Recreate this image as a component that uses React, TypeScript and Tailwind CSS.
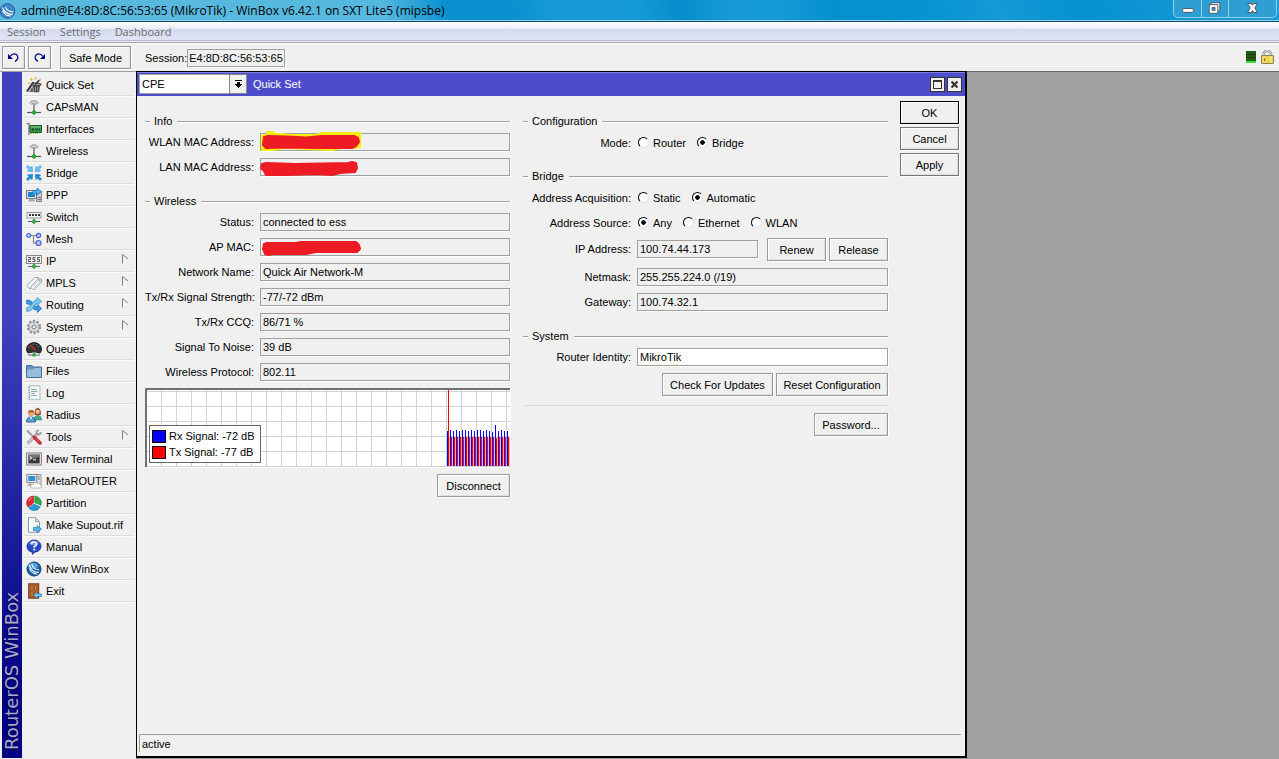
import React, { useState } from 'react';

/* ---------- shared pieces ---------- */

const btn =
  'h-[23px] border border-[#9a9a9a] bg-[#f0f0f0] text-center text-black shadow-[1px_1px_0_#fff,inset_1px_1px_0_#fff,inset_-1px_-1px_0_#e0e0e0]';

function Button({ children, className = '' }: { children: React.ReactNode; className?: string }) {
  return (
    <button type="button" className={`${btn} ${className}`}>
      {children}
    </button>
  );
}

function Group({ title, children }: { title: string; children: React.ReactNode }) {
  return (
    <section className="mb-3">
      <h2 className="flex h-[18px] items-center gap-1">
        <span className="h-px w-[5px] bg-[#a0a0a0] shadow-[0_1px_0_#fff]" />
        <span>{title}</span>
        <span className="ml-px h-px flex-1 bg-[#a0a0a0] shadow-[0_1px_0_#fff]" />
      </h2>
      {children}
    </section>
  );
}

function Scribble({ d, glow }: { d: string; glow?: boolean }) {
  return (
    <svg className="pointer-events-none absolute -top-1 -left-1 h-[26px] w-[110px]" viewBox="0 0 110 26" aria-hidden="true">
      {glow && <path d="M5 6 L10 5 L10 2 L18 2 L19 4 L27 4 L33 5 L60 5 L65 3 L105 3 L105 19 L97 20 L86 20 L76 22 L52 21 L29 20 L17 22 L5 22Z" fill="#f6ee10" />}
      <path d={d} fill="#ed1c24" stroke="#ed1c24" strokeWidth="2" strokeLinejoin="round" />
    </svg>
  );
}

function Field({
  id,
  label,
  labelWidth,
  value,
  editable,
  children,
}: {
  id: string;
  label: string;
  labelWidth: string;
  value: string;
  editable?: boolean;
  children?: React.ReactNode;
}) {
  return (
    <div className="flex h-[25px] items-start pt-[3px]">
      <label htmlFor={id} className={`${labelWidth} shrink-0 pr-[6px] text-right leading-[19px] whitespace-nowrap`}>
        {label}
      </label>
      <div className="relative min-w-0 flex-1">
        <input
          id={id}
          defaultValue={value}
          readOnly={!editable}
          className={`block h-[18px] w-full border border-[#a0a0a0] px-[2px] shadow-[1px_1px_0_#fff] outline-none ${editable ? 'bg-white' : 'bg-[#f0f0f0]'}`}
        />
        {children}
      </div>
    </div>
  );
}

function Radios({ label, name, options, initial }: { label: string; name: string; options: string[]; initial: string }) {
  const [value, setValue] = useState(initial);
  return (
    <fieldset className="flex h-[25px] items-center gap-2">
      <legend className="float-left w-[108px] shrink-0 text-right whitespace-nowrap">{label}</legend>
      <div className="-ml-px flex items-center gap-[11px]">
        {options.map((o) => (
          <label key={o} className="flex items-center gap-1">
            <input
              type="radio"
              name={name}
              checked={value === o}
              onChange={() => setValue(o)}
              className="size-[11px] appearance-none rounded-full border border-t-black border-r-[#e4e4e4] border-b-[#e4e4e4] border-l-black bg-white checked:bg-[radial-gradient(circle,#000_0_2px,#fff_2.5px)]"
            />
            {o}
          </label>
        ))}
      </div>
    </fieldset>
  );
}

/* ---------- icons (16 x 16) ---------- */

const wireless = (
  <>
    <path d="M3.5 4.5 Q8 -1 12.5 4.5" fill="none" stroke="#aaa" strokeWidth="1.3" />
    <path d="M5.5 5.5 Q8 2.5 10.5 5.5" fill="none" stroke="#8a8a8a" strokeWidth="1.2" />
    <path d="M8 5V13" stroke="#777" strokeWidth="1.5" />
    <path d="M1 13.5H15" stroke="#555" strokeWidth="1.2" />
    <path d="M8 11 10.5 13.5 8 15.8 5.5 13.5Z" fill="#25b52f" stroke="#087018" strokeWidth=".6" />
  </>
);

const globe = (
  <>
    <circle cx="8" cy="8" r="7" fill="#1b62ae" stroke="#0e3b74" />
    <ellipse cx="7" cy="4.8" rx="5" ry="3" fill="#5da4df" />
    <path d="M3.5 4 Q5 11.5 13 11.5M6 3.5 Q7 8.5 13 9M3.5 7.5 Q6 13 11 13" fill="none" stroke="#fff" strokeWidth="1.1" />
  </>
);

const icons: Record<string, React.ReactNode> = {
  'Quick Set': (
    <>
      <path d="M1 14.5 L7.5 5" stroke="#3a3a3a" strokeWidth="2.2" />
      <path d="M3 15 L6.5 9 L7.5 15Z" fill="#6b6b6b" />
      <path d="M7 7.5 L14 7.5 L13.2 15.2 H7.6Z" fill="#4c4c4c" />
      <path d="M9.3 9.5 9.6 14M11.5 9.5V14" stroke="#a5a5a5" strokeWidth=".8" />
      <ellipse cx="10.5" cy="7.5" rx="4.8" ry="1.4" fill="#9a9a9a" stroke="#222" strokeWidth=".8" />
      <path d="M9 7.5 L14.5 2" stroke="#333" strokeWidth="1.6" />
      <path d="M13.3 3.2 L14.5 1.8" stroke="#ddd" strokeWidth="1.4" />
      <path d="M5.5 .8V4.2M3.8 2.5H7.2M9.5 0V2.6M8.2 1.3H10.8M3 5V7M2 6H4" stroke="#d9bd27" strokeWidth=".9" />
    </>
  ),
  CAPsMAN: wireless,
  Wireless: wireless,
  Interfaces: (
    <>
      <path d="M.5 2.5H3V14" fill="none" stroke="#888" strokeWidth="1.6" />
      <path d="M4 4.5H15.5V11.5H4Z" fill="#3b9a4c" stroke="#176129" />
      <path d="M5 6H14.5" stroke="#8ccc86" />
      <path d="M6 7.5h2v2H6zM9.5 7.5h2v2h-2zM12.7 7.5h1.5v2h-1.5z" fill="#17452a" />
      <path d="M5 12.5H13" stroke="#cfae32" strokeDasharray="1 1" />
    </>
  ),
  Bridge: (
    <g fill="#6cc5f2" stroke="#3a94d2" strokeWidth=".7">
      <path d="M.5 2 2 .5 4.5 3 6 1.5 6.5 6.5 1.5 6 3 4.5Z" />
      <path d="M15.5 2 14 .5 11.5 3 10 1.5 9.5 6.5 14.5 6 13 4.5Z" />
      <path d="M.5 14 2 15.5 4.5 13 6 14.5 6.5 9.5 1.5 10 3 11.5Z" fill="#2492d8" stroke="#1167ab" />
      <path d="M15.5 14 14 15.5 11.5 13 10 14.5 9.5 9.5 14.5 10 13 11.5Z" fill="#2492d8" stroke="#1167ab" />
    </g>
  ),
  PPP: (
    <>
      <rect x="10.5" y="4.5" width="5" height="10" fill="#ccc" stroke="#888" />
      <path d="M11.5 10.5H15M11.5 12.5H15" stroke="#777" />
      <rect x=".5" y="3.5" width="10" height="8" fill="#ddd" stroke="#777" />
      <rect x="2" y="5" width="7" height="5" fill="#1f87c9" />
      <path d="M3.5 11.5H8L9 14.5H2Z" fill="#aaa" />
      <path d="M7 8V3.5H11V1L15.5 4.5 11 8V6H9V8Z" fill="#51b3ec" stroke="#1675b9" strokeWidth=".7" />
    </>
  ),
  Switch: (
    <>
      <rect x="1" y="3.5" width="14" height="5.5" fill="#f8f8f8" stroke="#999" />
      <path d="M3 6H14" stroke="#333" strokeWidth="1.8" strokeDasharray="2 1" />
      <path d="M8 9.5V12M2 12.5H14" stroke="#555" />
      <path d="M8 10.5 10.3 12.6 8 14.8 5.7 12.6Z" fill="#35b83c" stroke="#0b7519" strokeWidth=".6" />
    </>
  ),
  Mesh: (
    <>
      <path d="M4.7 4.5H10M7.5 4.5V12H10" fill="none" stroke="#888" strokeWidth="1.2" />
      <g fill="#b5c5ff" stroke="#4a62c9" strokeWidth="1.2">
        <circle cx="2.7" cy="4.5" r="2" />
        <circle cx="12.5" cy="4.5" r="2.2" />
        <circle cx="12.5" cy="12" r="2.5" />
      </g>
    </>
  ),
  IP: (
    <>
      <rect x=".5" y="2.5" width="15" height="8" fill="#eee" stroke="#888" />
      <path d="M2 4.5H4.5V6.5H2.5V8.5H5M9.5 4.5H7V6.5H9V8.5H6.5M14 4.5H11.5V6.5H13.5V8.5H11" fill="none" stroke="#444" strokeWidth=".9" />
      <path d="M8 10.5V13M2 13.5H14" stroke="#666" />
      <path d="M8 11.3 10.3 13.4 8 15.6 5.7 13.4Z" fill="#35b83c" stroke="#0b7519" strokeWidth=".6" />
    </>
  ),
  MPLS: (
    <g fill="#f6f9f9" stroke="#93a5a8">
      <path d="M.8 10.5 9 2.5H12.5L12 6 4 14Z" />
      <path d="M4.5 12 12 4H15.5V7L7.5 15Z" />
      <path d="M6.5 11.5 11.5 6.5M8 13 13 8" stroke="#c7d4d5" />
      <circle cx="13.5" cy="5.8" r=".7" />
    </g>
  ),
  Routing: (
    <>
      <path d="M.7 3 Q5 2.5 7.5 6.5 Q9.5 10 11.5 10V7.5L15.7 11.5 11.5 15.5V13.2Q7.5 13.5 5 9.5 Q3.5 6.5 .7 6.8Z" fill="#3d9bdb" stroke="#176ead" strokeWidth=".7" />
      <path d="M.7 10.5 Q4 10.5 6 6.5 Q8 2.8 11 2.8V.5L15.7 4.5 11 8.2V6.2Q9.5 6.5 8.2 9.2Q5.5 14.8 .7 14.3Z" fill="#7ec7f1" stroke="#2f86bf" strokeWidth=".7" />
    </>
  ),
  System: (
    <>
      <circle cx="8" cy="8" r="6" fill="#ddd" stroke="#8f8f8f" strokeWidth="2.4" strokeDasharray="2.2 1.57" />
      <circle cx="8" cy="8" r="5" fill="#e4e4e4" stroke="#999" strokeWidth=".8" />
      <circle cx="8" cy="8" r="2" fill="#f5f5f5" stroke="#777" />
      <path d="M8 3.8V5.5M8 10.5V12.2M3.8 8H5.5M10.5 8H12.2" stroke="#aaa" />
    </>
  ),
  Queues: (
    <>
      <path d="M2 12 A7.5 6.5 0 1 1 14 12 Q8 9.5 2 12Z" fill="#323232" stroke="#1b1b1b" />
      <path d="M2.5 7 Q4 3.5 8 3 Q12 3.5 13.5 7" fill="none" stroke="#aaa" strokeDasharray="1 2" />
      <path d="M4.5 4.5 9.5 9" stroke="#e12727" strokeWidth="1.2" />
      <path d="M8 11V14M2 14H14" stroke="#666" />
      <rect x="6.5" y="12.5" width="3" height="3" fill="#21ad31" />
    </>
  ),
  Files: (
    <>
      <path d="M.5 2.5H6L7 4H15.5V14.5H.5Z" fill="#6695bd" stroke="#416f99" />
      <path d="M1 6.5H7L8.5 5H15V14H1Z" fill="#98bbda" />
    </>
  ),
  Log: (
    <>
      <path d="M3 .8H14V15L12.6 14 11.2 15 9.8 14 8.4 15 7 14 5.6 15 4.2 14 3 15Z" fill="#f3f8f6" stroke="#a3b9b5" strokeWidth=".9" />
      <path d="M5 4.5H11M5 6.5H11.5M5 8.5H9M5 10.5H11" stroke="#96aaa5" />
      <path d="M3.5 2V14" stroke="#6d8782" strokeDasharray="1 1.5" />
    </>
  ),
  Radius: (
    <>
      <path d="M8.5 8 Q8.5 1 11.5 1 Q15.3 1 14.8 8Z" fill="#914326" />
      <circle cx="11.7" cy="4.7" r="2.2" fill="#f1b99b" />
      <path d="M8 13Q8 8.5 11.7 8.5T15.5 13Z" fill="#49a987" stroke="#247861" strokeWidth=".6" />
      <circle cx="5" cy="6.5" r="3" fill="#eda57c" />
      <path d="M2 6Q2 2.5 5.2 3 8.5 3 8 6 5 4.5 2 6Z" fill="#a36828" />
      <path d="M.5 15Q.5 10 5 10T9.5 15Z" fill="#539bd1" stroke="#1e5a94" strokeWidth=".8" />
      <path d="M4 10 5 13 6 10Z" fill="#fff" />
    </>
  ),
  Tools: (
    <>
      <path d="M1.5 14.5 11 5" stroke="#888" strokeWidth="3" />
      <path d="M1.5 14.5 11 5" stroke="#ddd" strokeWidth="1.5" />
      <path d="M12.5 .8 10.5 2.7 11 5 13.3 5.5 15.3 3.5" fill="none" stroke="#999" strokeWidth="1.8" />
      <path d="M1 1.5 8 8.5" stroke="#999" strokeWidth="1.8" />
      <path d="M8.3 8.3 14 14" stroke="#c8252e" strokeWidth="3.4" strokeLinecap="round" />
      <path d="M9 8.5 14 13.5" stroke="#f26970" />
    </>
  ),
  'New Terminal': (
    <>
      <rect x=".7" y="2" width="14.6" height="12" fill="#f5f5f5" stroke="#777" />
      <rect x="2.3" y="3.5" width="11.4" height="9" fill="#3a3a3a" />
      <path d="M3 4H13V6L3 9Z" fill="#737373" />
      <path d="M4 5.5 5.8 7 4 8.5M7 8.8H10" fill="none" stroke="#fff" />
    </>
  ),
  MetaROUTER: (
    <>
      <rect x="10.5" y="1.5" width="4.5" height="11" fill="#ddd" stroke="#999" />
      <path d="M11.5 4H14M11.5 6H14" stroke="#888" />
      <rect x=".8" y="1.5" width="10" height="8" fill="#eee" stroke="#888" />
      <rect x="2.3" y="3" width="7" height="5" fill="#2a91d7" />
      <path d="M1 13H6L5.5 10.5H3Z" fill="#aaa" />
      <path d="M5 15Q3.8 11.8 7 11.5 8.5 7.5 11.5 10.5 14 9.5 14 11.8 17 12.8 15 15Z" fill="#fff" stroke="#a8a8a8" strokeWidth=".8" />
    </>
  ),
  Partition: (
    <>
      <path d="M7.5 8V1A7 7 0 0 0 2 12.2Z" fill="#e12a2e" stroke="#a31118" strokeWidth=".5" />
      <path d="M8.7 7.5V1A7 7 0 0 1 14.9 10.5Z" fill="#32ac49" stroke="#15722b" strokeWidth=".5" />
      <path d="M8 9 14.3 12A7 7 0 0 1 2.8 13Z" fill="#239bd4" stroke="#08649b" strokeWidth=".5" />
      <path d="M3 6Q3.5 3.5 6 2.8" stroke="#ff9191" fill="none" />
    </>
  ),
  'Make Supout.rif': (
    <>
      <path d="M2.5.7H9.5L13.5 4.5V15.2H2.5Z" fill="#f8fcfc" stroke="#849c9b" />
      <path d="M9.5.7V4.7H13.5" fill="#ccdddd" stroke="#91a5a4" />
      <path d="M7.5 10.5H11V8.5L15.5 12 11 15.5V13.5H7.5Z" fill="#59b8ed" stroke="#1d78b6" strokeWidth=".7" />
    </>
  ),
  Manual: (
    <>
      <path d="M8 1C12 1 15 3.5 15 7.2S12 13 9 13L6.5 15.5 6 13C2.5 12.5 1 10 1 7.2S4 1 8 1Z" fill="#2847c4" stroke="#162a86" strokeWidth=".7" />
      <ellipse cx="8" cy="4" rx="5" ry="2.3" fill="#6583e6" />
      <path d="M5.7 5.2Q5.7 3 8 3T10.4 5.2Q10.4 6.5 8.2 7.5V8.7" fill="none" stroke="#fff" strokeWidth="1.7" />
      <rect x="7.2" y="9.7" width="2" height="1.8" fill="#fff" />
    </>
  ),
  'New WinBox': globe,
  Exit: (
    <>
      <rect x="2.7" y=".8" width="10" height="14.4" fill="#b56630" stroke="#6f3410" />
      <path d="M5 2.8H7V7H5ZM8.5 2.8H10.5V7H8.5ZM5 8.8H7V13.5H5ZM8.5 8.8H10.5V13.5H8.5Z" fill="#d28a4f" stroke="#824018" strokeWidth=".6" />
      <path d="M15.5 11V13.5H11.5V15.5L7.5 12.2 11.5 9V11Z" fill="#7cccf4" stroke="#1878b2" strokeWidth=".7" />
    </>
  ),
};

const menu = [
  'Quick Set', 'CAPsMAN', 'Interfaces', 'Wireless', 'Bridge', 'PPP', 'Switch', 'Mesh',
  'IP', 'MPLS', 'Routing', 'System', 'Queues', 'Files', 'Log', 'Radius', 'Tools',
  'New Terminal', 'MetaROUTER', 'Partition', 'Make Supout.rif', 'Manual', 'New WinBox', 'Exit',
];
const withSubmenu = new Set(['IP', 'MPLS', 'Routing', 'System', 'Tools']);

/* ---------- application chrome ---------- */

function TitleBar() {
  return (
    <header className="flex h-[22px] shrink-0 items-start justify-between border-b border-[#124b66] bg-[linear-gradient(75deg,#5ab9dd_0%,#56b8de_30%,#0a90cf_35%,#0a90cf_40%,#169ad7_43%,#149ad6_50%,#078dcb_53%,#159ad7_57%,#149ad7_61%,#0690cf_65%,#0593d3_72%,#149ad6_78%,#0691d1_84%,#1b9cd6_100%)] shadow-[inset_0_-1px_0_#8fd3ee]">
      <div className="flex h-[21px] items-center">
        <svg className="mr-[5px] size-4 shrink-0" viewBox="0 0 16 16" aria-hidden="true">
          <circle cx="7.5" cy="8" r="7.3" fill="#3b87c8" stroke="#265f9b" />
          <path d="M2.5 4.5Q5 11.8 13 11.3M5.5 3.8Q7 8.6 13.5 9M2.5 7.8Q5.5 13.3 11 13" fill="none" stroke="#fff" strokeWidth="1.1" />
        </svg>
        <h1 className="font-['Open_Sans','Noto_Sans',sans-serif] text-[12px] whitespace-nowrap">
          admin@E4:8D:8C:56:53:65 (MikroTik) - WinBox v6.42.1 on SXT Lite5 (mipsbe)
        </h1>
      </div>
      <div className="mr-[2px] flex h-[18px] divide-x divide-[#8fd0ea] rounded-b-[5px] border border-t-0 border-[#8fd0ea] bg-[#2d9fd3]">
        <button type="button" aria-label="Minimize" className="w-[28px]">
          <svg viewBox="0 0 28 17" className="h-[17px] w-full" aria-hidden="true">
            <rect x="9" y="8.5" width="11" height="4" rx="1" fill="#fff" stroke="#4b5867" />
          </svg>
        </button>
        <button type="button" aria-label="Restore" className="w-[27px]">
          <svg viewBox="0 0 27 17" className="h-[17px] w-full" aria-hidden="true">
            <path d="M9.5 2.5H18.5V11H9.5Z" fill="#fff" stroke="#4b5867" />
            <path d="M7.5 4.5H16.5V13.5H7.5Z" fill="#fff" stroke="#4b5867" />
            <path d="M10.5 7.5H13.5V10.5H10.5Z" fill="#2d9fd3" stroke="#4b5867" />
          </svg>
        </button>
        <button type="button" aria-label="Close" className="w-[47px]">
          <svg viewBox="0 0 47 17" className="h-[17px] w-full" aria-hidden="true">
            <path d="M18.5 3.5H22.3L23.5 5.3 24.7 3.5H28.5L25.8 8 28.5 12.5H24.7L23.5 10.5 22.3 12.5H18.5L21.2 8Z" fill="#fff" stroke="#4b5867" />
          </svg>
        </button>
      </div>
    </header>
  );
}

function MenuBar() {
  return (
    <nav className="flex h-[21px] shrink-0 items-center gap-[14px] border-b border-[#a0a0a0] bg-[linear-gradient(#fff_0,#e8ebf5_7px,#d4daed_7px,#dfe4f6_18px,#b5bdd3_18px,#b5bdd3_19px,#f0f0f0_19px)] px-[7px] font-['Open_Sans','Noto_Sans',sans-serif] text-[11px] leading-[18px] text-[#6d6d6d]">
      <button type="button">Session</button>
      <button type="button">Settings</button>
      <button type="button">Dashboard</button>
    </nav>
  );
}

function Toolbar() {
  return (
    <div className="flex h-7 shrink-0 items-center border-t border-white px-[2px]">
      <Button className="grid w-[23px] place-items-center">
        <svg className="size-[13px]" viewBox="0 0 13 13" role="img" aria-label="Undo">
          <path d="M3 5.5Q6 1.5 9.5 3.5 13 7 8 10.5" fill="none" stroke="#000080" strokeWidth="1.2" />
          <path d="M1 3V8H6Z" fill="#000080" />
        </svg>
      </Button>
      <Button className="ml-[3px] grid w-[23px] place-items-center">
        <svg className="size-[13px]" viewBox="0 0 13 13" role="img" aria-label="Redo">
          <path d="M10 5.5Q7 1.5 3.5 3.5 0 7 5 10.5" fill="none" stroke="#000080" strokeWidth="1.2" />
          <path d="M12 3V8H7Z" fill="#000080" />
        </svg>
      </Button>
      <Button className="ml-[9px] w-[71px]">Safe Mode</Button>
      <label htmlFor="session" className="ml-[14px]">Session:</label>
      <input id="session" readOnly value="E4:8D:8C:56:53:65" className="h-[18px] w-[98px] border border-[#a0a0a0] bg-[#f0f0f0] px-px shadow-[1px_1px_0_#fff] outline-none" />
      <svg className="mr-[3px] ml-auto h-4 w-7 shrink-0" viewBox="0 0 28 16" role="img" aria-label="CPU load and secure connection">
        <rect x="0" y="1" width="10" height="12" fill="#245c14" />
        <path d="M0 4.5H10M0 7.5H10" stroke="#123c08" />
        <path d="M0 12H10" stroke="#3ddc3d" strokeWidth="2" />
        <path d="M17.5 6V3.5L19.5 1H23L25 3.5V6" fill="none" stroke="#8d8d8d" strokeWidth="2.4" />
        <path d="M17.5 6V3.5L19.5 1H23L25 3.5V6" fill="none" stroke="#e8e8e8" strokeWidth="1" />
        <rect x="15.5" y="5.5" width="12" height="8" rx=".5" fill="#f1d252" stroke="#8b8354" />
        <path d="M18 6V13M25 6V13" stroke="#fff0a6" />
        <path d="M18.5 8.5V11" stroke="#7b6515" strokeWidth="1.2" />
      </svg>
    </div>
  );
}

function Sidebar() {
  return (
    <aside className="flex w-[136px] shrink-0 border-t border-[#a0a0a0] bg-[#f0f0f0] pl-[2px]">
      <div className="mb-px flex w-5 shrink-0 rotate-180 items-center justify-start bg-[linear-gradient(#000080_0%,#000080_8%,#4040c0_65%,#4040c0_100%)] [writing-mode:vertical-rl]">
        <div className="mt-2 font-['DejaVu_Sans',sans-serif] text-[18px] leading-5 whitespace-nowrap text-[#a9a9ce] [text-shadow:-1px_-1px_1px_#000040]">
          RouterOS WinBox
        </div>
      </div>
      <ul className="ml-[2px] w-[110px] pt-[2px]">
        {menu.map((name) => (
          <li key={name} className="h-[22px] border-b border-[#dcdcdc] shadow-[0_1px_0_#fafafa]">
            <button type="button" className="flex h-[21px] w-full items-center gap-1 pl-[2px] text-left whitespace-nowrap">
              <svg className="size-4 shrink-0" viewBox="0 0 16 16" aria-hidden="true">{icons[name]}</svg>
              <span>{name}</span>
              {withSubmenu.has(name) && (
                <svg className="mr-[5px] mb-1 ml-auto h-[10px] w-[7px]" viewBox="0 0 7 10" aria-hidden="true">
                  <path d="M.5 9.5 6 5" stroke="#fff" />
                  <path d="M.5 9.5V.5L6 5" fill="none" stroke="#808080" />
                </svg>
              )}
            </button>
          </li>
        ))}
      </ul>
    </aside>
  );
}

/* ---------- Quick Set window ---------- */

function SignalChart() {
  const bars = Array.from({ length: 21 }, (_, i) => i);
  return (
    <div className="relative h-[79px] border-t-2 border-l-2 border-[#707070] bg-white shadow-[1px_1px_0_#fff]">
      <svg className="h-full w-full" viewBox="0 0 363 77" preserveAspectRatio="xMaxYMin slice" shapeRendering="crispEdges" role="img" aria-label="Signal history">
        {Array.from({ length: 24 }, (_, i) => (
          <rect key={`v${i}`} x={14 + i * 15} y="0" width="1" height="77" fill="#d3d3d3" />
        ))}
        {Array.from({ length: 6 }, (_, i) => (
          <rect key={`h${i}`} x="0" y={1 + i * 15} width="363" height="1" fill="#d3d3d3" />
        ))}
        <rect x="301" y="0" width="1" height="76" fill="#f00" />
        {bars.map((i) => {
          const top = i === 16 ? 35 : i === 0 || i === 20 ? 41 : i === 15 ? 42 : i % 5 === 2 || i % 5 === 4 ? 41 : 40;
          return (
            <g key={i}>
              <rect x={300 + i * 3} y={top} width="1" height={76 - top} fill="#00f" />
              <rect x={301 + i * 3} y={i === 16 ? 48 : 47} width="1" height={i === 16 ? 28 : 29} fill="#f00" />
              <rect x={302 + i * 3} y="47" width="1" height="29" fill="#f00" opacity=".28" />
            </g>
          );
        })}
      </svg>
      <div className="absolute bottom-1 left-[2px] border border-[#666] bg-white p-[2px]">
        <div className="flex h-4 items-center gap-[3px] whitespace-nowrap">
          <span className="h-[13px] w-[14px] border border-black bg-[#00f]" />
          <span>Rx Signal:</span>
          <span className="pr-[3px]">-72 dB</span>
        </div>
        <div className="flex h-4 items-center gap-[3px] whitespace-nowrap">
          <span className="h-[13px] w-[14px] border border-black bg-[#f00]" />
          <span>Tx Signal:</span>
          <span className="pr-[3px]">-77 dB</span>
        </div>
      </div>
    </div>
  );
}

function QuickSetWindow() {
  const lw = 'w-[115px]';
  const rw = 'w-[114px]';
  return (
    <main className="mb-[1px] flex w-[831px] flex-col border border-r-2 border-b-2 border-black bg-[#f0f0f0]">
      <div className="flex h-6 shrink-0 items-center bg-[#4d4dcc] pr-[3px] pl-[2px] text-white shadow-[inset_0_1px_0_#7f7fe0]">
        <div className="relative">
          <select aria-label="Quick Set profile" className="block h-[20px] w-[108px] appearance-none border border-[#a0a0a0] bg-white px-[2px] text-black outline-none">
            <option>CPE</option>
            <option>Home AP</option>
            <option>PTP Bridge</option>
          </select>
          <span className="pointer-events-none absolute top-0 right-0 grid h-[20px] w-[18px] place-items-center border border-[#888] bg-[#f0f0f0]">
            <svg className="h-[9px] w-[9px]" viewBox="0 0 9 9" shapeRendering="crispEdges" aria-hidden="true">
              <path d="M1 0H8V1H1ZM4 2H5V4H8V5H7V6H6V7H5V8H4V7H3V6H2V5H1V4H4ZM3 2H6V4H3Z" fill="#000" />
            </svg>
          </span>
        </div>
        <h1 className="ml-[6px]">Quick Set</h1>
        <div className="ml-auto flex gap-[2px]">
          <button type="button" aria-label="Maximize" className="grid size-[15px] place-items-center border border-[#333] bg-[#f0f0f0]">
            <svg className="size-[9px]" viewBox="0 0 9 9" shapeRendering="crispEdges" aria-hidden="true">
              <path d="M0 0H9V9H0ZM1 2V8H8V2Z" fill="#333" fillRule="evenodd" />
            </svg>
          </button>
          <button type="button" aria-label="Close Quick Set" className="grid size-[15px] place-items-center border border-[#333] bg-[#f0f0f0]">
            <svg className="size-[9px]" viewBox="0 0 9 9" aria-hidden="true">
              <path d="M1.5 1.5 7.5 7.5M7.5 1.5 1.5 7.5" stroke="#333" strokeWidth="2.2" />
            </svg>
          </button>
        </div>
      </div>

      <div className="flex flex-1 px-2 pt-4 pr-[6px]">
        <div className="min-w-0 flex-1">
          <Group title="Info">
            <Field id="wlan-mac" label="WLAN MAC Address:" labelWidth={lw} value="">
              <Scribble glow d="M8 8 L12 7 32 7.5 50 8.5 66 7 98 7 102 9 103 13 100 17 96 19 60 19 30 18.5 10 19 7 16Z" />
            </Field>
            <Field id="lan-mac" label="LAN MAC Address:" labelWidth={lw} value="">
              <Scribble d="M6 10 L10 9 40 10 66 9.5 92 9 96 8 100 9 101 14 99 18 84 19 76 21 60 20 30 21 10 21 8 17 5 14Z" />
            </Field>
          </Group>
          <Group title="Wireless">
            <Field id="status" label="Status:" labelWidth={lw} value="connected to ess" />
            <Field id="ap-mac" label="AP MAC:" labelWidth={lw} value="">
              <Scribble d="M8 10 L11 9 40 9 45 8 100 8 103 11 104 15 101 18 60 18 50 20 16 20 13 21 9 20 7 15Z" />
            </Field>
            <Field id="network" label="Network Name:" labelWidth={lw} value="Quick Air Network-M" />
            <Field id="strength" label="Tx/Rx Signal Strength:" labelWidth={lw} value="-77/-72 dBm" />
            <Field id="ccq" label="Tx/Rx CCQ:" labelWidth={lw} value="86/71 %" />
            <Field id="snr" label="Signal To Noise:" labelWidth={lw} value="39 dB" />
            <Field id="protocol" label="Wireless Protocol:" labelWidth={lw} value="802.11" />
          </Group>
          <div className="-mt-[9px]">
            <SignalChart />
          </div>
          <div className="mt-[7px] flex justify-end">
            <Button className="w-[73px]">Disconnect</Button>
          </div>
        </div>

        <div className="ml-[13px] w-[365px] shrink-0">
          <Group title="Configuration">
            <Radios label="Mode:" name="mode" options={['Router', 'Bridge']} initial="Bridge" />
          </Group>
          <Group title="Bridge">
            <Radios label="Address Acquisition:" name="acquisition" options={['Static', 'Automatic']} initial="Automatic" />
            <Radios label="Address Source:" name="source" options={['Any', 'Ethernet', 'WLAN']} initial="Any" />
            <div className="flex h-[30px] items-start">
              <div className="flex-1 pt-[2px]">
                <Field id="ip" label="IP Address:" labelWidth={rw} value="100.74.44.173" />
              </div>
              <Button className="mt-[3px] ml-[9px] w-[59px]">Renew</Button>
              <Button className="mt-[3px] ml-[3px] w-[59px]">Release</Button>
            </div>
            <Field id="netmask" label="Netmask:" labelWidth={rw} value="255.255.224.0 (/19)" />
            <Field id="gateway" label="Gateway:" labelWidth={rw} value="100.74.32.1" />
          </Group>
          <Group title="System">
            <Field id="identity" label="Router Identity:" labelWidth={rw} value="MikroTik" editable />
            <div className="mt-[3px] flex justify-end gap-[3px]">
              <Button className="w-[111px]">Check For Updates</Button>
              <Button className="w-[112px]">Reset Configuration</Button>
            </div>
            <hr className="mt-[9px] border-t border-[#dcdcdc]" />
            <div className="mt-[7px] flex justify-end">
              <Button className="w-[74px]">Password...</Button>
            </div>
          </Group>
        </div>

        <div className="-mt-[11px] ml-3 flex w-[59px] shrink-0 flex-col gap-[3px]">
          <Button className="!border-black">OK</Button>
          <Button className="!border-[#777]">Cancel</Button>
          <Button className="!border-[#777]">Apply</Button>
        </div>
      </div>

      <footer className="mr-1 mb-1 ml-[2px] flex h-[18px] shrink-0 items-center border-t border-l border-[#a0a0a0] pl-[2px]">active</footer>
    </main>
  );
}

export default function App() {
  return (
    <div className="flex h-screen flex-col overflow-hidden bg-[#f0f0f0] font-['Liberation_Sans',Arial,sans-serif] text-[11px] leading-[14px] text-black">
      <TitleBar />
      <MenuBar />
      <Toolbar />
      <div className="flex min-h-0 flex-1">
        <Sidebar />
        <div className="flex min-w-0 flex-1 bg-[#a0a0a0]">
          <QuickSetWindow />
          <div className="flex-1 border-t border-[#696969]" />
        </div>
      </div>
    </div>
  );
}
